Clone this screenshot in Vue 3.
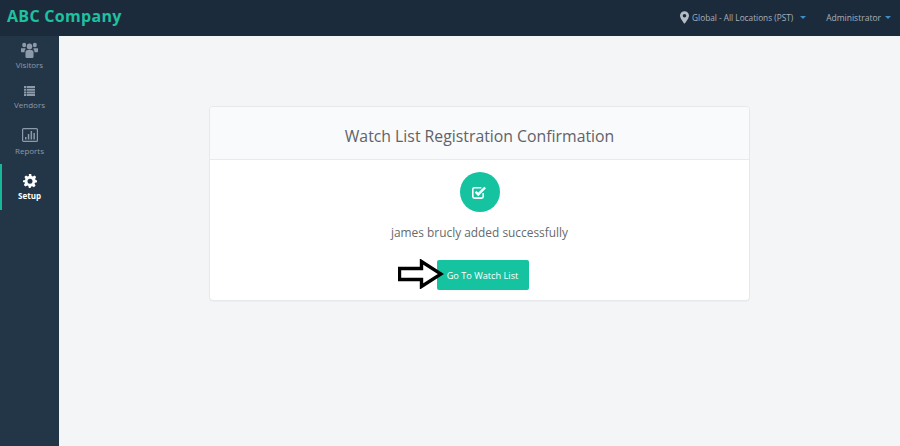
<template>
  <div class="page">
    <header class="topbar">
      <div class="brand">ABC Company</div>
      <div class="top-right">
        <div class="top-item location">
          <svg class="pin" viewBox="0 0 10 14" width="9" height="13"><path fill-rule="evenodd" d="M5 0a5 5 0 0 0-5 5c0 3 5 9 5 9s5-6 5-9a5 5 0 0 0-5-5zm0 3a2 2 0 1 1 0 4 2 2 0 0 1 0-4z" fill="#b4bcc6"/></svg>
          <span>Global - All Locations (PST)</span>
          <i class="caret"></i>
        </div>
        <div class="top-item">
          <span>Administrator</span>
          <i class="caret"></i>
        </div>
      </div>
    </header>
    <div class="body">
      <nav class="sidebar">
        <a class="nav-item visitors">
          <svg viewBox="0 0 16 14" width="17" height="16" preserveAspectRatio="none" fill="#8d9aa9">
            <circle cx="3" cy="2.6" r="1.9"/><circle cx="13" cy="2.6" r="1.9"/><circle cx="8" cy="4" r="2.6"/>
            <path d="M0 5.4h3.6c.5 0 .9.2 1 .5-.9.8-1.3 1.9-1.3 3.1H1c-.6 0-1-.4-1-1zM16 5.4h-3.6c-.5 0-.9.2-1 .5.9.8 1.3 1.9 1.3 3.1H15c.6 0 1-.4 1-1z"/>
            <path d="M4.2 9.2c0-1.4.8-2.2 2-2.2h3.6c1.2 0 2 .8 2 2.2V13c0 .6-.4 1-1 1H5.200c-.6 0-1-.4-1-1z"/>
          </svg>
          <span>Visitors</span>
        </a>
        <a class="nav-item vendors">
          <svg viewBox="0 0 11 10" width="11" height="10" fill="#8d9aa9">
            <path d="M0 0h2.400v2H0zM3 0h8v2H3zM0 2.700h2.400v2H0zM3 2.700h8v2H3zM0 5.400h2.400v2H0zM3 5.400h8v2H3zM0 8h2.400v2H0zM3 8h8v2H3z"/>
          </svg>
          <span>Vendors</span>
        </a>
        <a class="nav-item reports">
          <svg viewBox="0 0 16 14" width="16" height="14">
            <rect x=".6" y=".6" width="14.800" height="12.800" rx="1" fill="none" stroke="#8d9aa9" stroke-width="1.200"/>
            <path d="M3 9h1.500v2.500H3zM5.800 6h1.500v5.500H5.800zM8.600 3h1.500v8.500H8.600zM11.400 5h1.500v6.500h-1.500z" fill="#8d9aa9"/>
          </svg>
          <span>Reports</span>
        </a>
        <a class="nav-item active">
          <svg viewBox="0 0 24 24" width="14" height="14" fill="#fff">
            <path fill-rule="evenodd" d="M10 0h4l.8 3.400 2 .8L19.800 2.400l2.800 2.800-1.800 3 .8 2L24 11v3l-3.400.8-.8 2 1.800 3-2.800 2.800-3-1.800-2 .8L13 24h-3l-.8-3.400-2-.8-3 1.800-2.800-2.800 1.800-3-.8-2L0 14v-3l3.400-.8.8-2-1.800-3L5.200 2.400l3 1.800 2-.8zM12 8a4.300 4.300 0 1 0 0 8.600A4.300 4.300 0 0 0 12 8z"/>
          </svg>
          <span>Setup</span>
        </a>
      </nav>
      <main class="content">
        <section class="card">
          <div class="card-head">Watch List Registration Confirmation</div>
          <div class="card-body">
            <div class="check">
              <svg viewBox="0 0 16 14" width="17" height="15">
                <path d="M11.500 7.500v3.300c0 .9-.6 1.500-1.500 1.500H3.200c-.9 0-1.500-.6-1.500-1.500V4c0-.9.6-1.500 1.500-1.500h6.600" fill="none" stroke="#fff" stroke-width="1.500"/>
                <path d="M4.300 6.300 6.800 8.800 13.300 2.300" fill="none" stroke="#fff" stroke-width="2.300"/>
              </svg>
            </div>
            <p class="msg">james brucly added successfully</p>
            <div class="btn-wrap">
              <button class="btn">Go To Watch List</button>
              <svg class="arrow" viewBox="0 0 46 30" width="46" height="30">
                <path d="M1.500 9.500h22V2.500L43 15 23.500 27.500v-7h-22z" fill="#fff" stroke="#000" stroke-width="3.400"/>
              </svg>
            </div>
          </div>
        </section>
      </main>
    </div>
  </div>
</template>

<script setup>
</script>

<style>
html, body { margin: 0; padding: 0; }
</style>

<style scoped>
.page {
  width: 900px;
  height: 446px;
  overflow: hidden;
  display: flex;
  flex-direction: column;
  font-family: "Open Sans", "Noto Sans", sans-serif;
  background: #f4f5f7;
  color: #676a6c;
}

.topbar {
  height: 36px;
  flex: none;
  background: #1c2b3b;
  display: flex;
  align-items: center;
  justify-content: space-between;
  padding: 0 9px 0 7px;
  box-sizing: border-box;
}

.brand {
  color: #1ec1a0;
  font-size: 16px;
  font-weight: 700;
  letter-spacing: 0.3px;
  margin-top: -5px;
}

.top-right {
  display: flex;
  align-items: center;
  gap: 20px;
  margin-top: -2px;
}

.top-item {
  display: flex;
  align-items: center;
  color: #a7b1bc;
  font-size: 8.500px;
}

.location {
  font-size: 8.250px;
}

.location .caret {
  margin-left: 7px;
}

.pin {
  margin-right: 3px;
}

.caret {
  width: 0;
  height: 0;
  margin-left: 4px;
  border-left: 3px solid transparent;
  border-right: 3px solid transparent;
  border-top: 3px solid #3c8dc9;
}

.body {
  flex: 1;
  display: flex;
  min-height: 0;
}

.sidebar {
  width: 59px;
  flex: none;
  background: #233648;
  box-sizing: border-box;
  padding-top: 6px;
}

.nav-item {
  display: flex;
  flex-direction: column;
  align-items: center;
  color: #8d9aa9;
  font-size: 8px;
  height: 40px;
}

.nav-item span {
  margin-top: 2px;
  line-height: 12px;
}

.visitors span { margin-top: 1px; }
.vendors { padding-top: 4px; height: 37px; }
.vendors svg { margin-bottom: 1px; }
.reports { height: 47px; padding-top: 5px; box-sizing: border-box; }
.reports span { margin-top: 3px; }

.nav-item.active {
  color: #fff;
  font-weight: 700;
  height: 46px;
  margin-top: -6px;
  box-sizing: border-box;
  border-left: 2px solid #18b797;
  padding-right: 2px;
  justify-content: flex-start;
  padding-top: 10px;
}

.content {
  flex: 1;
  padding: 70px 150px 0;
  box-sizing: border-box;
}

.card {
  height: 195px;
  background: #fff;
  border: 1px solid #e6e8ec;
  border-radius: 4px;
  box-sizing: border-box;
  box-shadow: 0 1px 1px rgba(0, 0, 0, 0.03);
  overflow: hidden;
}

.card-head {
  height: 53px;
  background: #f9fafc;
  border-bottom: 1px solid #e8eaee;
  box-sizing: border-box;
  display: flex;
  align-items: center;
  justify-content: center;
  padding-top: 5px;
  font-size: 15.800px;
  color: #5f6367;
}

.card-body {
  display: flex;
  flex-direction: column;
  align-items: center;
  padding-top: 12px;
}

.check {
  width: 40px;
  height: 40px;
  border-radius: 50%;
  background: #15c3a0;
  display: flex;
  align-items: center;
  justify-content: center;
}

.msg {
  margin: 11px 0 0;
  font-size: 11.900px;
  line-height: 18px;
  color: #676a6c;
}

.btn-wrap {
  position: relative;
  margin: 19px 0 0 6px;
}

.btn {
  display: block;
  width: 92px;
  height: 30px;
  padding: 0;
  border: none;
  border-radius: 2px;
  background: #15c3a0;
  color: #fff;
  font-family: inherit;
  font-size: 9.200px;
  font-weight: 500;
}

.arrow {
  position: absolute;
  left: -39px;
  top: -1px;
}
</style>
